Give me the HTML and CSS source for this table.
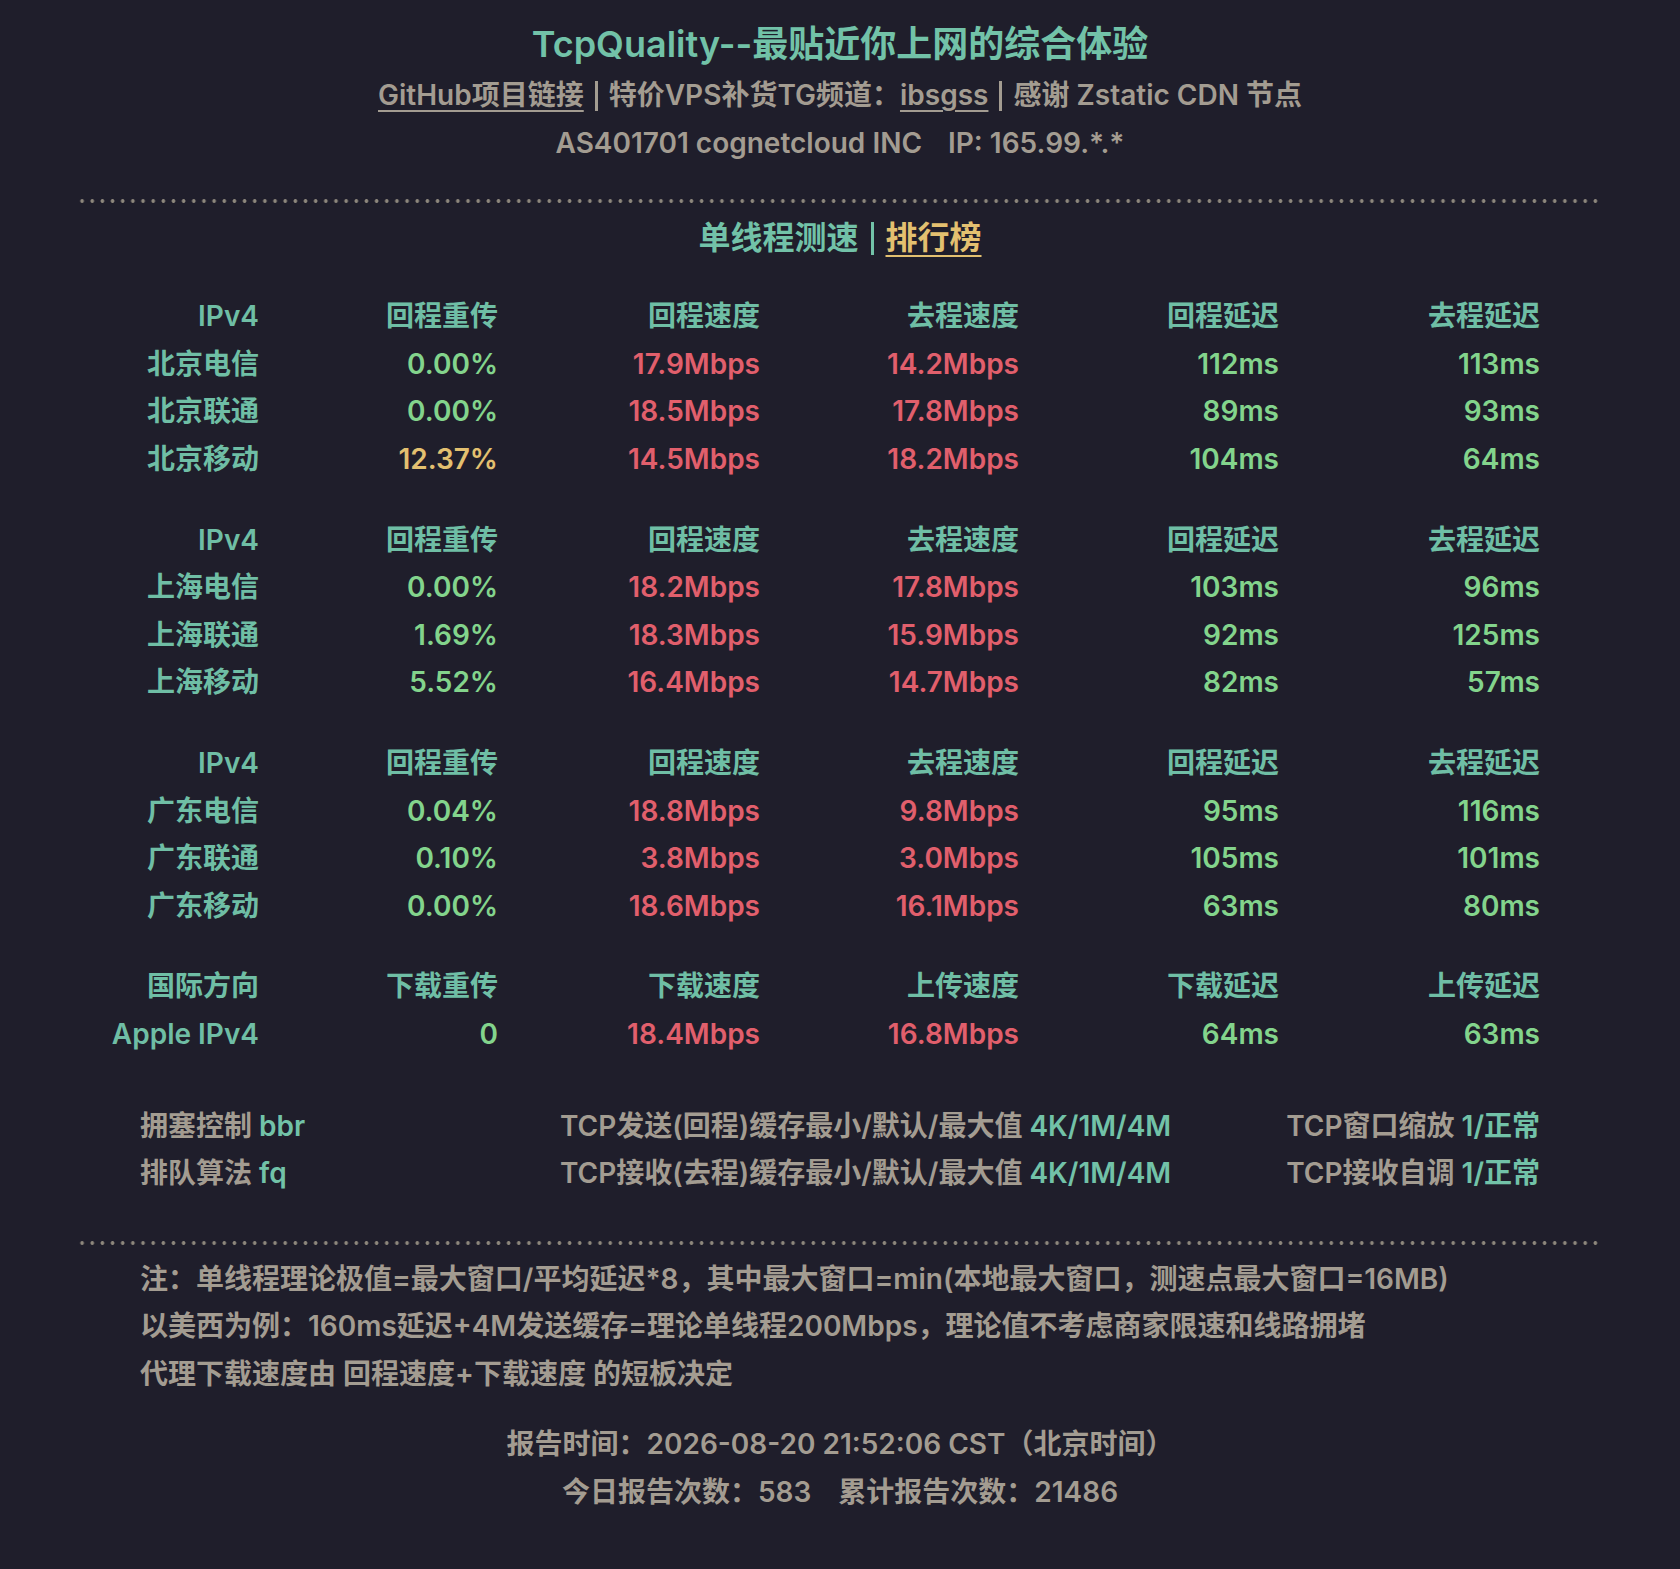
FILE: index.html
```html
<!DOCTYPE html>
<html lang="zh-CN">
<head>
<meta charset="utf-8">
<title>TcpQuality</title>
<link rel="stylesheet" href="styles.css">
</head>
<body>
<div class="page">
  <header class="head">
    <h1 class="title">TcpQuality--最贴近你上网的综合体验</h1>
    <div class="sub"><a class="link" href="#">GitHub项目链接</a><span class="bar"></span>特价VPS补货TG频道：<a class="link" href="#">ibsgss</a><span class="bar"></span>感谢 Zstatic CDN 节点</div>
    <div class="sub">AS401701 cognetcloud INC<span class="ip">IP: 165.99.*.*</span></div>
  </header>

  <div class="rule"></div>

  <div class="section-title">单线程测速<span class="bar bar-teal"></span><a class="rank" href="#">排行榜</a></div>

  <div class="groups">
    <div class="grid">
      <div class="h">IPv4</div><div class="h">回程重传</div><div class="h">回程速度</div><div class="h">去程速度</div><div class="h">回程延迟</div><div class="h">去程延迟</div>
      <div class="h">北京电信</div><div class="g">0.00%</div><div class="r">17.9Mbps</div><div class="r">14.2Mbps</div><div class="g">112ms</div><div class="g">113ms</div>
      <div class="h">北京联通</div><div class="g">0.00%</div><div class="r">18.5Mbps</div><div class="r">17.8Mbps</div><div class="g">89ms</div><div class="g">93ms</div>
      <div class="h">北京移动</div><div class="y">12.37%</div><div class="r">14.5Mbps</div><div class="r">18.2Mbps</div><div class="g">104ms</div><div class="g">64ms</div>
    </div>
    <div class="grid">
      <div class="h">IPv4</div><div class="h">回程重传</div><div class="h">回程速度</div><div class="h">去程速度</div><div class="h">回程延迟</div><div class="h">去程延迟</div>
      <div class="h">上海电信</div><div class="g">0.00%</div><div class="r">18.2Mbps</div><div class="r">17.8Mbps</div><div class="g">103ms</div><div class="g">96ms</div>
      <div class="h">上海联通</div><div class="g">1.69%</div><div class="r">18.3Mbps</div><div class="r">15.9Mbps</div><div class="g">92ms</div><div class="g">125ms</div>
      <div class="h">上海移动</div><div class="g">5.52%</div><div class="r">16.4Mbps</div><div class="r">14.7Mbps</div><div class="g">82ms</div><div class="g">57ms</div>
    </div>
    <div class="grid">
      <div class="h">IPv4</div><div class="h">回程重传</div><div class="h">回程速度</div><div class="h">去程速度</div><div class="h">回程延迟</div><div class="h">去程延迟</div>
      <div class="h">广东电信</div><div class="g">0.04%</div><div class="r">18.8Mbps</div><div class="r">9.8Mbps</div><div class="g">95ms</div><div class="g">116ms</div>
      <div class="h">广东联通</div><div class="g">0.10%</div><div class="r">3.8Mbps</div><div class="r">3.0Mbps</div><div class="g">105ms</div><div class="g">101ms</div>
      <div class="h">广东移动</div><div class="g">0.00%</div><div class="r">18.6Mbps</div><div class="r">16.1Mbps</div><div class="g">63ms</div><div class="g">80ms</div>
    </div>
    <div class="grid">
      <div class="h">国际方向</div><div class="h">下载重传</div><div class="h">下载速度</div><div class="h">上传速度</div><div class="h">下载延迟</div><div class="h">上传延迟</div>
      <div class="h">Apple IPv4</div><div class="g">0</div><div class="r">18.4Mbps</div><div class="r">16.8Mbps</div><div class="g">64ms</div><div class="g">63ms</div>
    </div>
  </div>

  <div class="settings">
    <div class="s-left">拥塞控制 <span class="t">bbr</span></div>
    <div class="s-mid">TCP发送(回程)缓存最小/默认/最大值 <span class="t">4K/1M/4M</span></div>
    <div class="s-right">TCP窗口缩放 <span class="t">1/正常</span></div>
    <div class="s-left">排队算法 <span class="t">fq</span></div>
    <div class="s-mid">TCP接收(去程)缓存最小/默认/最大值 <span class="t">4K/1M/4M</span></div>
    <div class="s-right">TCP接收自调 <span class="t">1/正常</span></div>
  </div>

  <div class="rule rule-2"></div>

  <div class="notes">
    <p>注：单线程理论极值=最大窗口/平均延迟*8，其中最大窗口=min(本地最大窗口，测速点最大窗口=16MB)</p>
    <p>以美西为例：160ms延迟+4M发送缓存=理论单线程200Mbps，理论值不考虑商家限速和线路拥堵</p>
    <p>代理下载速度由 回程速度+下载速度 的短板决定</p>
  </div>

  <footer class="foot">
    <p>报告时间：2026-08-20 21:52:06 CST（北京时间）</p>
    <p>今日报告次数：583<span class="gap"></span>累计报告次数：21486</p>
  </footer>
</div>
</body>
</html>
```

FILE: styles.css
```css
html, body {
  margin: 0;
  padding: 0;
  background: #1f1e2b;
}

body {
  font-family: Inter, "Noto Sans CJK SC", sans-serif;
  font-weight: 600;
  font-size: 28px;
  line-height: 47.6px;
  color: #a39c91;
}

.page {
  padding: 16px 77px 52px;
}

.head {
  text-align: center;
}

.title {
  margin: 0;
  font-size: 36px;
  line-height: 56px;
  font-weight: 600;
  color: #72c2a8;
}

.sub {
  color: #a39c91;
}

.link {
  color: #a39c91;
  text-decoration: underline;
  text-decoration-thickness: 2px;
  text-underline-offset: 5px;
}

.bar {
  display: inline-block;
  width: 3px;
  height: 30px;
  background: #a39c91;
  margin: 0 11px;
  vertical-align: -6px;
}

.bar-teal {
  background: #72c2a8;
  height: 33px;
  margin: 0 12px;
}

.ip {
  margin-left: 26px;
}

.rule {
  margin-top: 32px;
  height: 4px;
  background-image: radial-gradient(circle at 50% 50%, #8d877c 1.6px, rgba(141,135,124,0) 2.1px);
  background-size: 10.17px 4px;
  background-repeat: repeat-x;
}

.rule-2 {
  margin-top: 43px;
}

.section-title {
  margin-top: 11px;
  text-align: center;
  font-size: 32px;
  line-height: 48px;
  color: #72c2a8;
}

.rank {
  color: #e3c070;
  text-decoration: underline;
  text-decoration-thickness: 2px;
  text-underline-offset: 6px;
}

.groups {
  margin-top: 31px;
  display: flex;
  flex-direction: column;
  gap: 33px;
}

.grid {
  display: grid;
  grid-template-columns: 182px 239px 262px 259px 260px 261px;
  text-align: right;
}

.h { color: #6fbea5; }
.g { color: #83d48c; }
.r { color: #e15f6c; }
.y { color: #e3c070; }
.t { color: #72c2a8; }

.settings {
  margin-top: 44px;
  padding-left: 63px;
  display: grid;
  grid-template-columns: 420px auto 1fr;
  width: 1400px;
}

.s-left, .s-mid {
  text-align: left;
  white-space: nowrap;
}

.s-right {
  text-align: right;
  white-space: nowrap;
}

.notes {
  margin-top: 11px;
  padding-left: 63px;
}

.notes p, .foot p {
  margin: 0;
}

.foot {
  margin-top: 23px;
  text-align: center;
}

.gap {
  display: inline-block;
  width: 27px;
}
```
